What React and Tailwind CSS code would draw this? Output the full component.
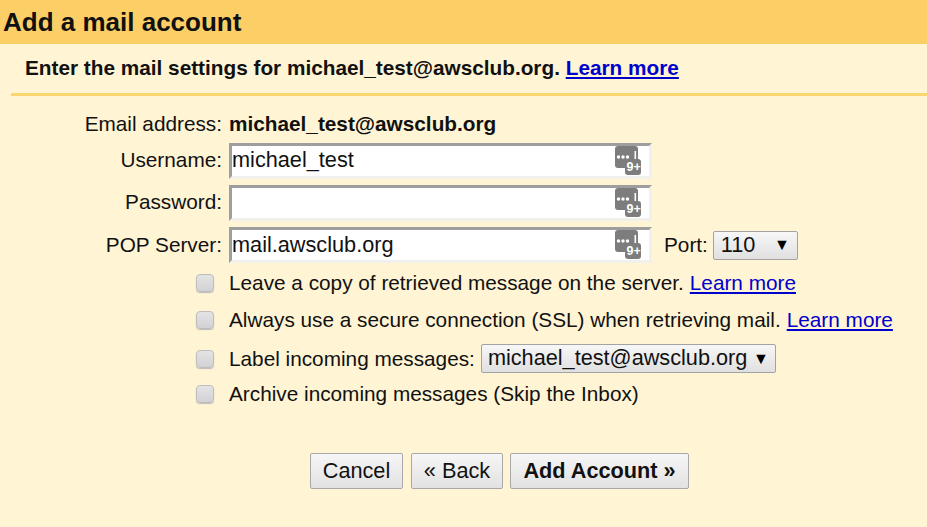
const font = { fontFamily: '"Liberation Sans", Arial, sans-serif' };

function KeyIcon() {
  return (
    <svg width="26" height="29" viewBox="0 0 26 29" className="absolute right-[8px] top-0">
      <rect x="0" y="0" width="23" height="22" rx="3" fill="#7d7d7d" />
      <rect x="10" y="13" width="16" height="16" rx="3" fill="#7d7d7d" />
      <circle cx="3.5" cy="11" r="1.7" fill="#fff" />
      <circle cx="8" cy="11" r="1.7" fill="#fff" />
      <circle cx="12.5" cy="11" r="1.7" fill="#fff" />
      <rect x="19.5" y="5" width="1.6" height="8" fill="#fff" />
      <text x="11.5" y="25" fontSize="12.5" fontWeight="700" fill="#fff" style={font}>9+</text>
    </svg>
  );
}

function TextBox({ value, className }) {
  return (
    <div className="relative w-[423px] h-[36px] bg-white border-t-[3px] border-l-[3px] border-t-[#9e9e9e] border-l-[#9e9e9e] border-r-[3px] border-b-[3px] border-r-[#f2f0ea] border-b-[#f2f0ea] box-border">
      <div className={`leading-[28px] text-[21.7px] text-[#111] ${className}`}>{value}</div>
      <KeyIcon />
    </div>
  );
}

function Field({ label, labelClass, children }) {
  return (
    <div className="flex items-center h-[36px]">
      <div className={`w-[222px] text-right text-[20.78px] leading-[34px] text-[#111] ${labelClass}`}>{label}</div>
      <div className="ml-[7px] flex items-center">{children}</div>
    </div>
  );
}

function Drop({ value, className }) {
  return (
    <div className={`flex items-center justify-between h-[29px] rounded-[2px] border border-[#a3a3a3] bg-gradient-to-b from-[#f7f7f7] to-[#e0e0e0] text-[21.7px] text-[#111] ${className}`}>
      <span>{value}</span>
      <span className="text-[16px] text-black">▼</span>
    </div>
  );
}

function CheckRow({ children, className }) {
  return (
    <div className={`flex items-center pl-[196px] ${className}`}>
      <div className="w-[18px] h-[18px] rounded-[4px] border border-[#bdbdbd] bg-gradient-to-b from-[#e4e4e4] to-[#d2d2d6] shadow-[0_1px_1px_#bbb]" />
      <div className="ml-[15px] flex items-center text-[20.78px] text-[#111] whitespace-nowrap">{children}</div>
    </div>
  );
}

function Btn({ children, className }) {
  return (
    <button className={`h-[36px] pt-px rounded-[2px] border border-[#a8a8a8] bg-gradient-to-b from-[#f6f6f6] to-[#e2e2e2] text-[21.7px] text-[#111] ${className}`}>
      {children}
    </button>
  );
}

export default function App() {
  return (
    <div className="w-[927px] h-[527px] overflow-hidden bg-[#fff4d4]" style={font}>
      <div className="h-[44px] bg-[#fbcf66] pl-[3px] text-[26px] leading-[45px] font-bold text-[#111]">Add a mail account</div>

      <div className="ml-[11px] h-[52px] border-b-[3px] border-[#fad670] pl-[14px] text-[20.78px] leading-[48px] font-bold text-[#111]">
        Enter the mail settings for michael_test@awsclub.org.{' '}
        <a className="text-[#0000cc] underline">Learn more</a>
      </div>

      <div className="flex items-center h-[26px] mt-[15px] text-[20.78px] text-[#111]">
        <div className="w-[222px] text-right">Email address:</div>
        <div className="ml-[7px] font-bold">michael_test@awsclub.org</div>
      </div>

      <div className="mt-[6px] flex flex-col gap-[6px]">
        <Field label="Username:" labelClass="pb-[2px]"><TextBox value="michael_test" /></Field>
        <Field label="Password:" labelClass="pb-[2px]"><TextBox value="" /></Field>
        <Field label="POP Server:">
          <TextBox value="mail.awsclub.org" className="pt-px" />
          <span className="ml-[12px] text-[20.78px] text-[#111]">Port:</span>
          <Drop value="110" className="ml-[5px] w-[85px] pl-[7px] pr-[7px]" />
        </Field>
      </div>

      <CheckRow className="mt-[8px] h-[24px]">
        Leave a copy of retrieved message on the server.
        <a className="ml-[6px] text-[#0000cc] underline">Learn more</a>
      </CheckRow>
      <CheckRow className="mt-[13px] h-[24px]">
        Always use a secure connection (SSL) when retrieving mail.
        <a className="ml-[6px] text-[#0000cc] underline">Learn more</a>
      </CheckRow>
      <CheckRow className="mt-[12px] h-[29px]">
        Label incoming messages:
        <Drop value="michael_test@awsclub.org" className="ml-[6px] w-[295px] pl-[6px] pr-[6px]" />
      </CheckRow>
      <CheckRow className="mt-[9px] h-[24px]">Archive incoming messages (Skip the Inbox)</CheckRow>

      <div className="mt-[47px] pl-[310px] flex">
        <Btn className="w-[93px]">Cancel</Btn>
        <Btn className="ml-[8px] w-[92px]">« Back</Btn>
        <Btn className="ml-[7px] w-[179px] font-bold">Add Account »</Btn>
      </div>
    </div>
  );
}
